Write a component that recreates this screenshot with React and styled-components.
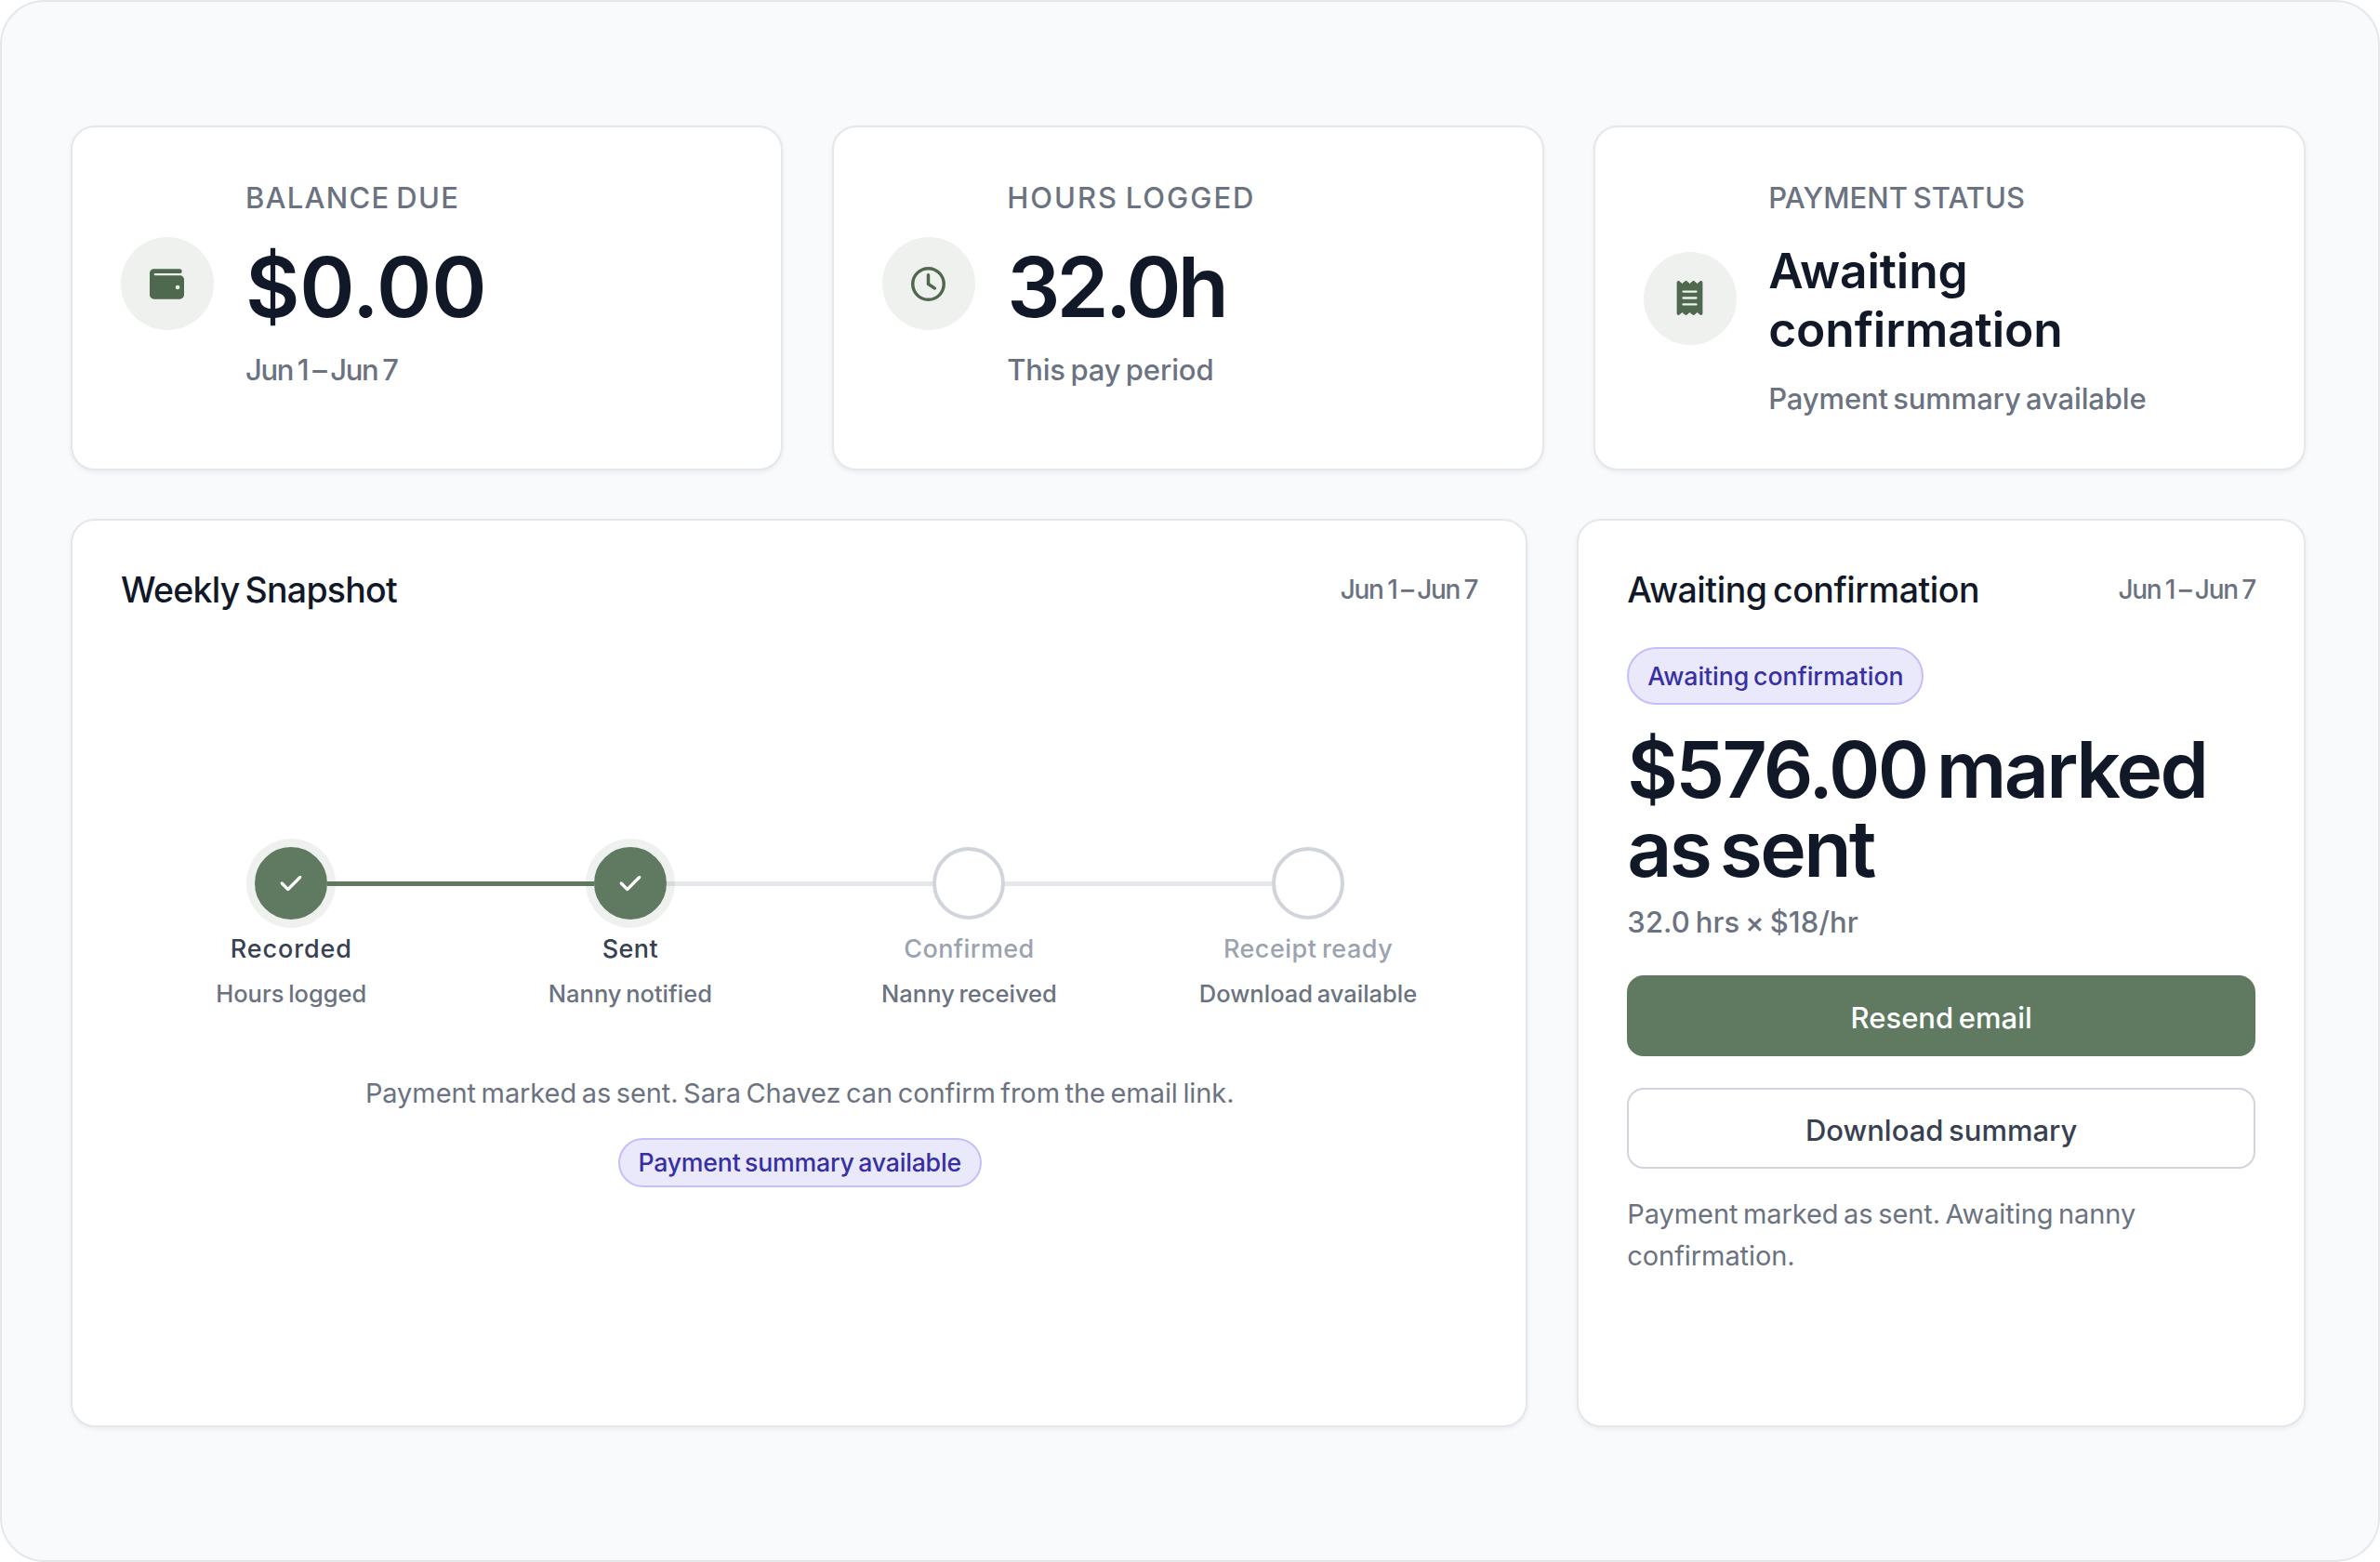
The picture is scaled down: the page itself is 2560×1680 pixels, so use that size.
import styled, { createGlobalStyle } from "styled-components";
import { FaCheck, FaReceipt, FaRegClock, FaWallet } from "react-icons/fa6";

const GlobalStyle = createGlobalStyle`
  * {
    box-sizing: border-box;
  }
  body {
    margin: 0;
    background: #fff;
    font-family: Inter, "Liberation Sans", sans-serif;
    -webkit-font-smoothing: antialiased;
  }
  h2, p, span, button {
    margin: 0;
    word-spacing: -0.085em;
  }
`;

const StyledPage = styled.main`
  display: flex;
  flex-direction: column;
  gap: 53px;
  width: 2560px;
  height: 1680px;
  padding: 133px 78px 0 74px;
  background: #f9fafc;
  border: 2px solid #e5e7eb;
  border-radius: 48px;
`;

const StyledCard = styled.section`
  background: #fff;
  border: 2px solid #e5e7eb;
  border-radius: 26px;
  box-shadow: 0 2px 5px rgba(17, 24, 39, 0.06);
`;

const StyledStatGrid = styled.div`
  display: grid;
  grid-template-columns: repeat(3, 1fr);
  gap: 53.4px;
  height: 370px;
`;

const StyledStatCard = styled(StyledCard)`
  display: flex;
  align-items: flex-start;
  padding: 52px 52px 52px 51.5px;
`;

const StyledStatContent = styled.div`
  display: flex;
  align-items: center;
  gap: 34.5px;
`;

const StyledStatIcon = styled.div`
  display: flex;
  align-items: center;
  justify-content: center;
  flex: none;
  width: 100px;
  height: 100px;
  border-radius: 50%;
  background: #eef1ee;
  color: #4f694f;
  font-size: 37px;
`;

const StyledStatLabel = styled.p`
  font-size: 31px;
  line-height: 47px;
  font-weight: 500;
  letter-spacing: ${({ $tracking }) => $tracking}px;
  color: #6b7280;
`;

const StyledStatValue = styled.p`
  margin: ${({ $small }) => ($small ? "24px 0 20px" : "25px 0 17px")};
  font-size: ${({ $small }) => ($small ? "51.5px" : "90px")};
  line-height: ${({ $small }) => ($small ? "62.5px" : "96px")};
  font-weight: 600;
  letter-spacing: ${({ $tracking }) => $tracking}px;
  color: #111827;
`;

const StyledStatHint = styled.p`
  font-size: 31px;
  line-height: 47px;
  font-weight: 500;
  letter-spacing: -0.15px;
  color: #6b7280;
`;

const StyledDateRange = styled.span`
  letter-spacing: -0.046em;
  word-spacing: -0.06em;
`;

const StyledPanelGrid = styled.div`
  display: grid;
  grid-template-columns: 2fr 1fr;
  gap: 53px;
  height: 977px;
`;

const StyledPanel = styled(StyledCard)`
  display: flex;
  flex-direction: column;
  padding: 46px 52px;
`;

const StyledPanelHeader = styled.header`
  display: flex;
  align-items: center;
  justify-content: space-between;
  height: 56px;
  margin-bottom: 34px;
`;

const StyledPanelTitle = styled.h2`
  font-size: 37.5px;
  line-height: 55px;
  font-weight: 500;
  letter-spacing: ${({ $tracking }) => $tracking}px;
  color: #111827;
`;

const StyledPanelDate = styled.p`
  font-size: 28px;
  font-weight: 500;
  color: #6b7280;
`;

const StyledSnapshot = styled.div`
  display: flex;
  flex-direction: column;
  align-items: center;
  padding: 215px 0 0 1px;
`;

const StyledSteps = styled.div`
  display: grid;
  grid-template-columns: repeat(4, 1fr);
  width: 100%;
  margin-bottom: 65px;
`;

const StyledStep = styled.div`
  display: flex;
  flex-direction: column;
  align-items: center;
`;

const StyledStepTrack = styled.div`
  display: flex;
  align-items: center;
  width: 100%;
`;

const lineColors = { none: "transparent", done: "#5f7a61", todo: "#e5e7eb" };

const StyledStepLine = styled.div`
  flex: 1;
  height: 5px;
  background: ${({ $state }) => lineColors[$state]};
`;

const StyledStepDot = styled.div`
  position: relative;
  display: flex;
  align-items: center;
  justify-content: center;
  width: 78px;
  height: 78px;
  border-radius: 50%;
  border: 4px solid ${({ $done }) => ($done ? "#5f7a61" : "#d1d5db")};
  background: ${({ $done }) => ($done ? "#5f7a61" : "#fff")};
  box-shadow: ${({ $done }) => ($done ? "0 0 0 9px rgba(95, 122, 97, 0.1)" : "none")};
  color: #fff;
  font-size: 26px;
`;

const StyledStepLabel = styled.p`
  margin-top: 12px;
  font-size: 27px;
  line-height: 40px;
  font-weight: 500;
  letter-spacing: ${({ $tracking }) => $tracking}px;
  color: ${({ $done }) => ($done ? "#374151" : "#9ca3af")};
`;

const StyledStepHint = styled.p`
  margin-top: 8px;
  font-size: 25.5px;
  line-height: 40px;
  font-weight: 500;
  color: #6b7280;
`;

const StyledNote = styled.p`
  font-size: 29px;
  line-height: 44.5px;
  letter-spacing: -0.08px;
  color: #6b7280;
`;

const StyledPill = styled.span`
  display: flex;
  align-items: center;
  justify-content: center;
  flex: none;
  width: ${({ $width }) => $width}px;
  height: ${({ $height }) => $height}px;
  border: 2px solid #c4bffa;
  border-radius: 999px;
  background: #eae8fb;
  font-size: 26.7px;
  font-weight: 500;
  letter-spacing: ${({ $tracking }) => $tracking}px;
  color: #3730a3;
`;

const StyledSnapshotPill = styled(StyledPill)`
  margin-top: 25px;
`;

const StyledAmount = styled.p`
  margin-top: 27px;
  font-size: 84px;
  line-height: 85.4px;
  font-weight: 600;
  letter-spacing: -2.7px;
  word-spacing: -8px;
  color: #111827;
`;

const StyledRate = styled.p`
  margin-top: 12px;
  font-size: 31px;
  line-height: 47px;
  font-weight: 500;
  letter-spacing: 0.12px;
  color: #6b7280;
`;

const StyledActions = styled.div`
  display: flex;
  flex-direction: column;
  gap: 34px;
  margin: 34px 0 27.5px;
`;

const StyledButton = styled.button`
  width: 100%;
  height: 87px;
  padding: 4px 0 0;
  border: 2px solid ${({ $primary }) => ($primary ? "#5f7a61" : "#d1d5db")};
  border-radius: 18px;
  background: ${({ $primary }) => ($primary ? "#5f7a61" : "#fff")};
  color: ${({ $primary }) => ($primary ? "#fff" : "#374151")};
  font-family: inherit;
  font-size: 31px;
  font-weight: 500;
`;

const steps = [
  { label: "Recorded", hint: "Hours logged", done: true, before: "none", after: "done", tracking: 0.9 },
  { label: "Sent", hint: "Nanny notified", done: true, before: "done", after: "todo", tracking: 0.4 },
  { label: "Confirmed", hint: "Nanny received", done: false, before: "todo", after: "todo", tracking: 0.4 },
  { label: "Receipt ready", hint: "Download available", done: false, before: "todo", after: "none", tracking: 0.5 },
];

const dateRange = <StyledDateRange>Jun 1 – Jun 7</StyledDateRange>;

function StatCard({ icon, label, value, hint, small, labelTracking, valueTracking }) {
  return (
    <StyledStatCard>
      <StyledStatContent>
        <StyledStatIcon>{icon}</StyledStatIcon>
        <div>
          <StyledStatLabel $tracking={labelTracking}>{label}</StyledStatLabel>
          <StyledStatValue $small={small} $tracking={valueTracking}>
            {value}
          </StyledStatValue>
          <StyledStatHint>{hint}</StyledStatHint>
        </div>
      </StyledStatContent>
    </StyledStatCard>
  );
}

function Step({ label, hint, done, before, after, tracking }) {
  return (
    <StyledStep>
      <StyledStepTrack>
        <StyledStepLine $state={before} />
        <StyledStepDot $done={done}>{done && <FaCheck />}</StyledStepDot>
        <StyledStepLine $state={after} />
      </StyledStepTrack>
      <StyledStepLabel $done={done} $tracking={tracking}>
        {label}
      </StyledStepLabel>
      <StyledStepHint>{hint}</StyledStepHint>
    </StyledStep>
  );
}

export default function App() {
  return (
    <>
      <GlobalStyle />
      <StyledPage>
        <StyledStatGrid>
          <StatCard
            icon={<FaWallet />}
            label="BALANCE DUE"
            value="$0.00"
            hint={dateRange}
            labelTracking={1.25}
            valueTracking={-0.2}
          />
          <StatCard
            icon={<FaRegClock />}
            label="HOURS LOGGED"
            value="32.0h"
            hint="This pay period"
            labelTracking={2}
            valueTracking={-3.8}
          />
          <StatCard
            icon={<FaReceipt />}
            label="PAYMENT STATUS"
            value={
              <>
                Awaiting
                <br />
                confirmation
              </>
            }
            hint="Payment summary available"
            small
            labelTracking={0.05}
            valueTracking={-0.15}
          />
        </StyledStatGrid>

        <StyledPanelGrid>
          {/* Weekly snapshot */}
          <StyledPanel>
            <StyledPanelHeader>
              <StyledPanelTitle $tracking={-0.75}>Weekly Snapshot</StyledPanelTitle>
              <StyledPanelDate>{dateRange}</StyledPanelDate>
            </StyledPanelHeader>
            <StyledSnapshot>
              <StyledSteps>
                {steps.map((step) => (
                  <Step key={step.label} {...step} />
                ))}
              </StyledSteps>
              <StyledNote>Payment marked as sent. Sara Chavez can confirm from the email link.</StyledNote>
              <StyledSnapshotPill $width={391} $height={53} $tracking={-0.22}>
                Payment summary available
              </StyledSnapshotPill>
            </StyledSnapshot>
          </StyledPanel>

          {/* Payment status */}
          <StyledPanel>
            <StyledPanelHeader>
              <StyledPanelTitle $tracking={-0.45}>Awaiting confirmation</StyledPanelTitle>
              <StyledPanelDate>{dateRange}</StyledPanelDate>
            </StyledPanelHeader>
            <StyledPill $width={319} $height={62} $tracking={-0.05}>
              Awaiting confirmation
            </StyledPill>
            <StyledAmount>
              $576.00 marked
              <br />
              as sent
            </StyledAmount>
            <StyledRate>32.0 hrs × $18/hr</StyledRate>
            <StyledActions>
              <StyledButton $primary>Resend email</StyledButton>
              <StyledButton>Download summary</StyledButton>
            </StyledActions>
            <StyledNote>
              Payment marked as sent. Awaiting nanny
              <br />
              confirmation.
            </StyledNote>
          </StyledPanel>
        </StyledPanelGrid>
      </StyledPage>
    </>
  );
}
